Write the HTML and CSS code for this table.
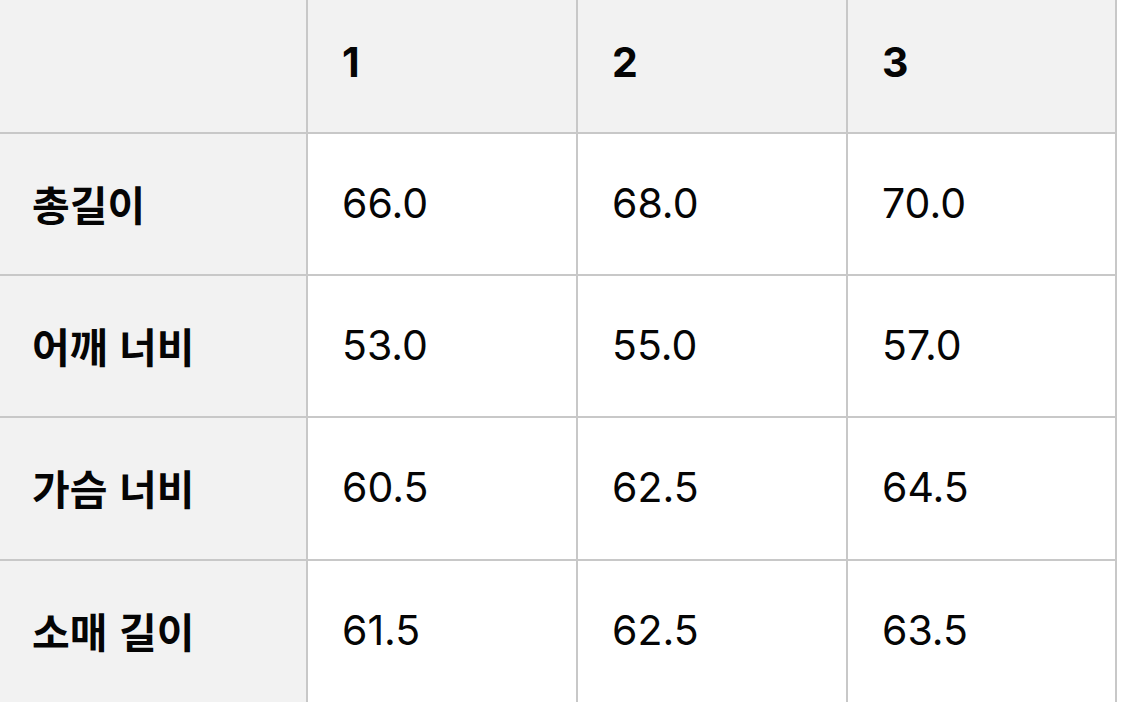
FILE: index.html
```html
<!DOCTYPE html>
<html lang="ko">
<head>
<meta charset="utf-8">
<title>사이즈 표</title>
<link rel="stylesheet" href="styles.css">
</head>
<body>
<div class="size-table">
  <div class="cell head corner"></div>
  <div class="cell head">1</div>
  <div class="cell head">2</div>
  <div class="cell head">3</div>

  <div class="cell label">총길이</div>
  <div class="cell">66.0</div>
  <div class="cell">68.0</div>
  <div class="cell">70.0</div>

  <div class="cell label">어깨 너비</div>
  <div class="cell">53.0</div>
  <div class="cell">55.0</div>
  <div class="cell">57.0</div>

  <div class="cell label">가슴 너비</div>
  <div class="cell">60.5</div>
  <div class="cell">62.5</div>
  <div class="cell">64.5</div>

  <div class="cell label">소매 길이</div>
  <div class="cell">61.5</div>
  <div class="cell">62.5</div>
  <div class="cell">63.5</div>
</div>
</body>
</html>
```

FILE: styles.css
```css
html, body {
  margin: 0;
  padding: 0;
  background: #ffffff;
}

body {
  width: 1125px;
  height: 702px;
  overflow: hidden;
  font-family: "Inter", "Noto Sans CJK KR", sans-serif;
  color: #050505;
}

.size-table {
  display: inline-grid;
  grid-template-columns: 306px 268px 268px 267px;
  grid-template-rows: 132px 140px 140px 141px 141px;
  gap: 2px;
  background: #c8c8c8;
  padding-right: 2px;
}

.cell {
  background: #ffffff;
  display: flex;
  align-items: center;
  padding-left: 34px;
  padding-bottom: 3px;
  font-size: 41px;
  font-weight: 400;
}

.head {
  background: #f2f2f2;
  font-weight: 700;
  padding-bottom: 9px;
}

.label {
  background: #f2f2f2;
  font-weight: 700;
  font-family: "Noto Sans CJK KR", "Inter", sans-serif;
  padding-left: 32px;
  padding-bottom: 3px;
}
```
